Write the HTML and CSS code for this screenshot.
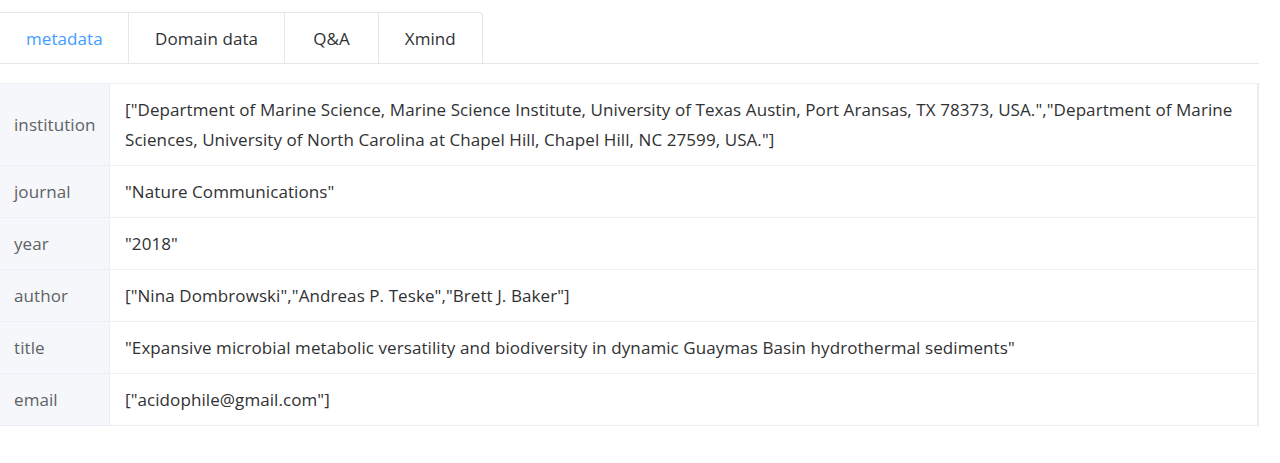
FILE: index.html
```html
<!DOCTYPE html>
<html>
<head>
<meta charset="utf-8">
<link rel="stylesheet" href="styles.css">
</head>
<body>
<div class="page">
  <div class="tabs">
    <div class="tab-list">
      <div class="tab active">metadata</div>
      <div class="tab">Domain data</div>
      <div class="tab tab-wide">Q&amp;A</div>
      <div class="tab">Xmind</div>
    </div>
  </div>
  <table class="desc">
    <tr><th>institution</th><td>["Department of Marine Science, Marine Science Institute, University of Texas Austin, Port Aransas, TX 78373, USA.","Department of Marine Sciences, University of North Carolina at Chapel Hill, Chapel Hill, NC 27599, USA."]</td></tr>
    <tr><th>journal</th><td>"Nature Communications"</td></tr>
    <tr><th>year</th><td>"2018"</td></tr>
    <tr><th>author</th><td>["Nina Dombrowski","Andreas P. Teske","Brett J. Baker"]</td></tr>
    <tr><th>title</th><td>"Expansive microbial metabolic versatility and biodiversity in dynamic Guaymas Basin hydrothermal sediments"</td></tr>
    <tr><th>email</th><td>["acidophile@gmail.com"]</td></tr>
  </table>
</div>
</body>
</html>
```
FILE: styles.css
```css
html, body {
  margin: 0;
  padding: 0;
  background: #fff;
}
body {
  font-family: "Open Sans", "Noto Sans", sans-serif;
  font-size: 17px;
  letter-spacing: 0.08px;
  color: #303133;
}
.page {
  padding-top: 12px;
  width: 1259px;
}
.tabs {
  border-bottom: 1px solid #e4e7ed;
}
.tab-list {
  display: inline-flex;
  border: 1px solid #e4e7ed;
  border-left: none;
  border-bottom: none;
  border-radius: 0 4px 0 0;
}
.tab {
  height: 50px;
  line-height: 51px;
  padding: 0 26px;
  border-left: 1px solid #e4e7ed;
  color: #303133;
}
.tab:first-child {
  border-left: none;
  padding: 0 26px 0 26px;
  width: 76px;
}
.tab-wide {
  padding: 0 28px;
}
.tab.active {
  color: #409eff;
}
.desc {
  margin-top: 19px;
  width: 1259px;
  border-collapse: collapse;
  table-layout: fixed;
}
.desc th, .desc td {
  border: 1px solid #ebeef5;
  line-height: 30px;
  padding: 11px 15px 10px;
  font-weight: normal;
  text-align: left;
  vertical-align: middle;
}
.desc th {
  width: 80px;
  padding-left: 14px;
  padding-right: 15px;
  background: #f5f7fa;
  color: #606266;
  border-left: none;
}
.desc td {
  color: #303133;
  border-right: 2px solid #e9ecf1;
}
```
